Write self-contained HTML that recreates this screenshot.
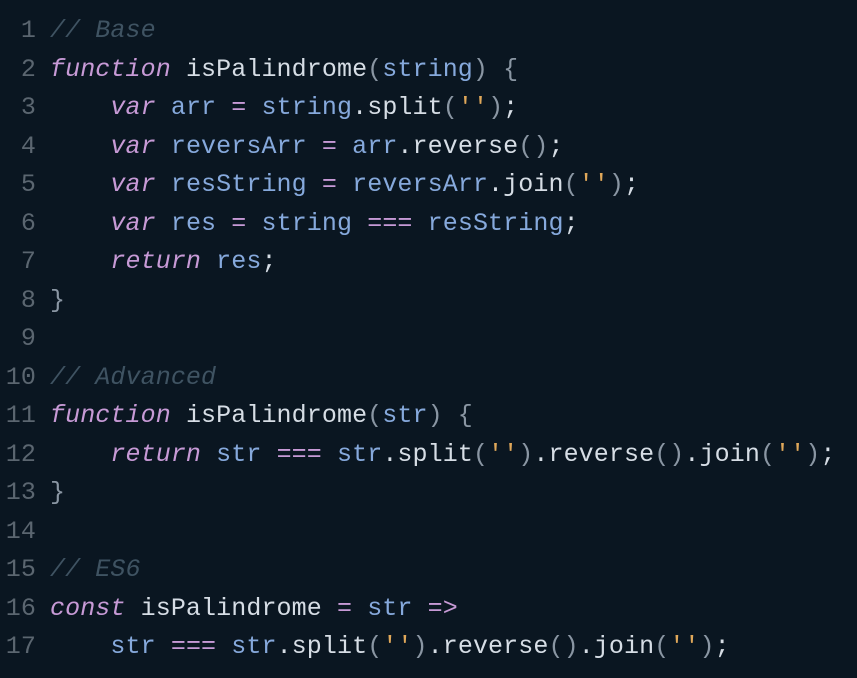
<!DOCTYPE html>
<html><head><style>
html,body{margin:0;padding:0;background:#0a1621;width:857px;height:678px;overflow:hidden}
.c{position:absolute;left:0;top:12px;font-family:"Liberation Mono",monospace;font-size:25px;line-height:38.5px;color:#c9d0d8;letter-spacing:0.1px}
.l{display:flex;white-space:pre;height:38.5px}
.n{width:36px;text-align:right;color:#5b6670;margin-right:14px}
.k{color:#c79ad6;font-style:italic}
.cm{color:#3f5362;font-style:italic}
.v{color:#86a9dc}
.o{color:#c79ad6}
.s{color:#e0a85a}
.p{color:#8a96a3}
.f{color:#d6dde5}
</style></head><body>
<div class="c">
<div class="l"><span class="n">1</span><span class="cm">// Base</span></div>
<div class="l"><span class="n">2</span><span><span class="k">function</span> <span class="f">isPalindrome</span><span class="p">(</span><span class="v">string</span><span class="p">) {</span></span></div>
<div class="l"><span class="n">3</span><span>    <span class="k">var</span> <span class="v">arr</span> <span class="o">=</span> <span class="v">string</span><span class="f">.split</span><span class="p">(</span><span class="s">''</span><span class="p">)</span><span class="f">;</span></span></div>
<div class="l"><span class="n">4</span><span>    <span class="k">var</span> <span class="v">reversArr</span> <span class="o">=</span> <span class="v">arr</span><span class="f">.reverse</span><span class="p">()</span><span class="f">;</span></span></div>
<div class="l"><span class="n">5</span><span>    <span class="k">var</span> <span class="v">resString</span> <span class="o">=</span> <span class="v">reversArr</span><span class="f">.join</span><span class="p">(</span><span class="s">''</span><span class="p">)</span><span class="f">;</span></span></div>
<div class="l"><span class="n">6</span><span>    <span class="k">var</span> <span class="v">res</span> <span class="o">=</span> <span class="v">string</span> <span class="o">===</span> <span class="v">resString</span><span class="f">;</span></span></div>
<div class="l"><span class="n">7</span><span>    <span class="k">return</span> <span class="v">res</span><span class="f">;</span></span></div>
<div class="l"><span class="n">8</span><span class="p">}</span></div>
<div class="l"><span class="n">9</span><span> </span></div>
<div class="l"><span class="n">10</span><span class="cm">// Advanced</span></div>
<div class="l"><span class="n">11</span><span><span class="k">function</span> <span class="f">isPalindrome</span><span class="p">(</span><span class="v">str</span><span class="p">) {</span></span></div>
<div class="l"><span class="n">12</span><span>    <span class="k">return</span> <span class="v">str</span> <span class="o">===</span> <span class="v">str</span><span class="f">.split</span><span class="p">(</span><span class="s">''</span><span class="p">)</span><span class="f">.reverse</span><span class="p">()</span><span class="f">.join</span><span class="p">(</span><span class="s">''</span><span class="p">)</span><span class="f">;</span></span></div>
<div class="l"><span class="n">13</span><span class="p">}</span></div>
<div class="l"><span class="n">14</span><span> </span></div>
<div class="l"><span class="n">15</span><span class="cm">// ES6</span></div>
<div class="l"><span class="n">16</span><span><span class="k">const</span> <span class="f">isPalindrome</span> <span class="o">=</span> <span class="v">str</span> <span class="o">=&gt;</span></span></div>
<div class="l"><span class="n">17</span><span>    <span class="v">str</span> <span class="o">===</span> <span class="v">str</span><span class="f">.split</span><span class="p">(</span><span class="s">''</span><span class="p">)</span><span class="f">.reverse</span><span class="p">()</span><span class="f">.join</span><span class="p">(</span><span class="s">''</span><span class="p">)</span><span class="f">;</span></span></div>
</div>
</body></html>
